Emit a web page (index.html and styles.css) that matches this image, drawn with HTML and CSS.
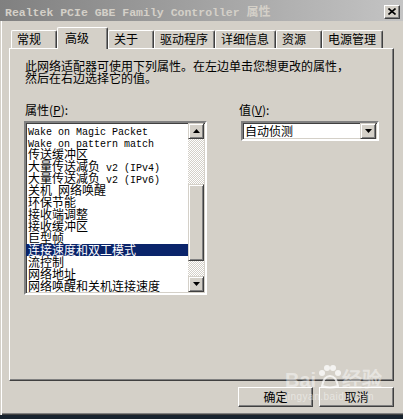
FILE: index.html
```html
<!DOCTYPE html>
<html lang="zh-CN">
<head>
    <meta charset="UTF-8">
    <meta name="viewport" content="width=device-width, initial-scale=1.0">
    <title>Realtek PCIe GBE Family Controller 属性</title>
    <link rel="stylesheet" href="styles.css">
</head>
<body>

    <div class="window">
        <div class="titlebar">
            <span class="title">Realtek PCIe GBE Family Controller <span class="title-cjk">属性</span></span>
            <span class="close-btn">
                <svg width="8" height="7" viewBox="0 0 8 7"><path d="M0.5 0.5 L7.5 6.5 M7.5 0.5 L0.5 6.5" stroke="#000" stroke-width="1.6"/></svg>
            </span>
        </div>

        <div class="content">
            <div class="tabs">
                <div class="tab">常规</div>
                <div class="tab active">高级</div>
                <div class="tab">关于</div>
                <div class="tab">驱动程序</div>
                <div class="tab">详细信息</div>
                <div class="tab">资源</div>
                <div class="tab">电源管理</div>
            </div>

            <div class="panel">
                <p class="intro">此网络适配器可使用下列属性。在左边单击您想更改的属性，<br>然后在右边选择它的值。</p>

                <div class="cols">
                    <div class="col-left">
                        <div class="field-label">属性(<u>P</u>):</div>
                        <div class="listbox">
                            <ul class="items">
                                <li><span class="lat">Wake on Magic Packet</span></li>
                                <li><span class="lat">Wake on pattern match</span></li>
                                <li>传送缓冲区</li>
                                <li>大量传送减负<span class="lat"> v2 (IPv4)</span></li>
                                <li>大量传送减负<span class="lat"> v2 (IPv6)</span></li>
                                <li>关机<span class="lat"> </span>网络唤醒</li>
                                <li>环保节能</li>
                                <li>接收端调整</li>
                                <li>接收缓冲区</li>
                                <li>巨型帧</li>
                                <li class="selected">连接速度和双工模式</li>
                                <li>流控制</li>
                                <li>网络地址</li>
                                <li>网络唤醒和关机连接速度</li>
                            </ul>
                            <div class="scrollbar">
                                <div class="sb-btn">
                                    <svg width="7" height="4" viewBox="0 0 7 4"><polygon points="3.5,0 7,4 0,4" fill="#000"/></svg>
                                </div>
                                <div class="sb-track">
                                    <div class="sb-thumb"></div>
                                </div>
                                <div class="sb-btn">
                                    <svg width="7" height="4" viewBox="0 0 7 4"><polygon points="0,0 7,0 3.5,4" fill="#000"/></svg>
                                </div>
                            </div>
                        </div>
                    </div>

                    <div class="col-right">
                        <div class="field-label">值(<u>V</u>):</div>
                        <div class="combo">
                            <span class="combo-text">自动侦测</span>
                            <span class="sb-btn">
                                <svg width="7" height="4" viewBox="0 0 7 4"><polygon points="0,0 7,0 3.5,4" fill="#000"/></svg>
                            </span>
                        </div>
                    </div>
                </div>
            </div>

            <div class="buttons">
                <button>确定</button>
                <button>取消</button>
            </div>
        </div>

        <!-- watermark -->
        <div class="watermark">
            <div class="wm-logo">Bai<span class="wm-paw">
                <svg width="26" height="26" viewBox="0 0 26 26">
                    <circle cx="6" cy="9" r="3" fill="#fff"/>
                    <circle cx="11" cy="4" r="3" fill="#fff"/>
                    <circle cx="17" cy="4" r="3" fill="#fff"/>
                    <circle cx="22" cy="9" r="3" fill="#fff"/>
                    <path d="M6 22 Q8 12 14 12 Q20 12 22 22 Q14 25 6 22 Z" fill="none" stroke="#fff" stroke-width="2"/>
                </svg>
            </span>经验</div>
            <div class="wm-url">jingyan.baidu.com</div>
        </div>
    </div>

</body>
</html>
```

FILE: styles.css
```css
* {
    margin: 0;
    padding: 0;
    box-sizing: border-box;
}

body {
    width: 403px;
    height: 419px;
    overflow: hidden;
    background-color: #18232e;
    font-family: "Noto Sans CJK SC", sans-serif;
    font-size: 12px;
    line-height: 12px;
    color: #000;
}

.window {
    position: relative;
    width: 403px;
    height: 415px;
    background-color: #d4d0c8;
    box-shadow: inset 1px 0 #d4d0c8, inset 2px 0 #fff, inset 0 -1px #404040, inset 0 -2px #808080;
    display: flex;
    flex-direction: column;
}

/* title bar */
.titlebar {
    height: 21px;
    background: linear-gradient(to right, #808080, #c4c4c4);
    display: flex;
    align-items: center;
    justify-content: space-between;
    padding: 0 3px 0 5px;
}

.title {
    margin-top: 3px;
    font-family: "Liberation Mono", monospace;
    font-weight: bold;
    font-size: 11.5px;
    color: #d4d0c8;
    white-space: nowrap;
}

.title-cjk {
    font-family: "Noto Sans CJK SC", sans-serif;
    font-size: 12px;
}

.close-btn {
    width: 16px;
    height: 14px;
    margin-top: 2px;
    background-color: #d4d0c8;
    border: 1px solid;
    border-color: #fff #404040 #404040 #fff;
    box-shadow: inset -1px -1px #808080;
    display: flex;
    align-items: center;
    justify-content: center;
}

/* tabs */
.content {
    flex: 1;
    padding: 6px 9px 0 9px;
    display: flex;
    flex-direction: column;
}

.tabs {
    display: flex;
    align-items: flex-end;
    height: 21px;
    padding-left: 2px;
}

.tab {
    height: 18px;
    min-width: 46px;
    padding: 2px 6px 0 5px;
    background-color: #d4d0c8;
    border: 1px solid #fff;
    border-bottom: none;
    border-right-color: #404040;
    border-radius: 2px 2px 0 0;
    box-shadow: inset -1px 0 #808080;
    white-space: nowrap;
}

.tab.active {
    position: relative;
    z-index: 1;
    height: 22px;
    min-width: 51px;
    padding: 4px 6px 0 7px;
    margin-bottom: -1px;
}

.panel {
    height: 333px;
    border: 1px solid;
    border-color: #fff #404040 #404040 #fff;
    box-shadow: inset -1px -1px #808080;
    padding: 11px 14px 0 14px;
}

.intro {
    padding-left: 1px;
    white-space: nowrap;
}

.cols {
    display: flex;
    margin-top: 20px;
}

.col-left {
    width: 185px;
}

.col-right {
    margin-left: 31px;
    width: 141px;
}

.field-label {
    padding-left: 1px;
    margin-bottom: 5px;
}

/* list box */
.listbox {
    height: 174px;
    display: flex;
    background-color: #fff;
    border: 2px solid;
    border-color: #808080 #fff #fff #808080;
    box-shadow: inset 1px 1px #404040, inset -1px -1px #d4d0c8;
    padding: 1px 0 0 0;
}

.items {
    flex: 1;
    list-style: none;
    padding-top: 0;
}

.items li {
    height: 12px;
    padding-left: 2px;
    white-space: nowrap;
}

.items li.selected {
    background-color: #0a246a;
    color: #fff;
}

.lat {
    font-family: "Liberation Mono", monospace;
    font-size: 10px;
}

.scrollbar {
    width: 16px;
    display: flex;
    flex-direction: column;
    margin-top: -1px;
    margin-right: 1px;
    margin-bottom: 1px;
}

.sb-btn {
    width: 16px;
    height: 16px;
    flex: 0 0 auto;
    background-color: #d4d0c8;
    border: 1px solid;
    border-color: #d4d0c8 #404040 #404040 #d4d0c8;
    box-shadow: inset 1px 1px #fff, inset -1px -1px #808080;
    display: flex;
    align-items: center;
    justify-content: center;
}

.sb-track {
    flex: 1;
    background-image: conic-gradient(#fff 25%, #d4d0c8 0 50%, #fff 0 75%, #d4d0c8 0);
    background-size: 2px 2px;
}

.sb-thumb {
    height: 77px;
    margin-top: 45px;
    background-color: #d4d0c8;
    border: 1px solid;
    border-color: #d4d0c8 #404040 #404040 #d4d0c8;
    box-shadow: inset 1px 1px #fff, inset -1px -1px #808080;
}

/* combo box */
.combo {
    margin-left: 3px;
    width: 138px;
    height: 20px;
    display: flex;
    align-items: center;
    justify-content: space-between;
    background-color: #fff;
    border: 2px solid;
    border-color: #808080 #fff #fff #808080;
    box-shadow: inset 1px 1px #404040, inset -1px -1px #d4d0c8;
    padding: 0 1px 0 2px;
}

/* dialog buttons */
.buttons {
    display: flex;
    justify-content: flex-end;
    gap: 6px;
    margin-top: 6px;
}

button {
    width: 75px;
    height: 20px;
    font-family: "Noto Sans CJK SC", sans-serif;
    font-size: 12px;
    line-height: 12px;
    color: #000;
    background-color: #d4d0c8;
    border: 1px solid;
    border-color: #fff #404040 #404040 #fff;
    box-shadow: inset -1px -1px #808080;
}

/* baidu watermark */
.watermark {
    position: absolute;
    left: 285px;
    top: 364px;
    color: rgba(255, 255, 255, 0.6);
    opacity: 0.75;
}

.wm-logo {
    display: flex;
    align-items: flex-end;
    font-family: "Liberation Sans", sans-serif;
    font-size: 20px;
    line-height: 20px;
    font-weight: bold;
}

.wm-logo svg {
    display: block;
}

.wm-url {
    margin-top: 2px;
    font-family: "Liberation Sans", sans-serif;
    font-size: 10px;
    line-height: 10px;
    letter-spacing: 0.5px;
}
```
